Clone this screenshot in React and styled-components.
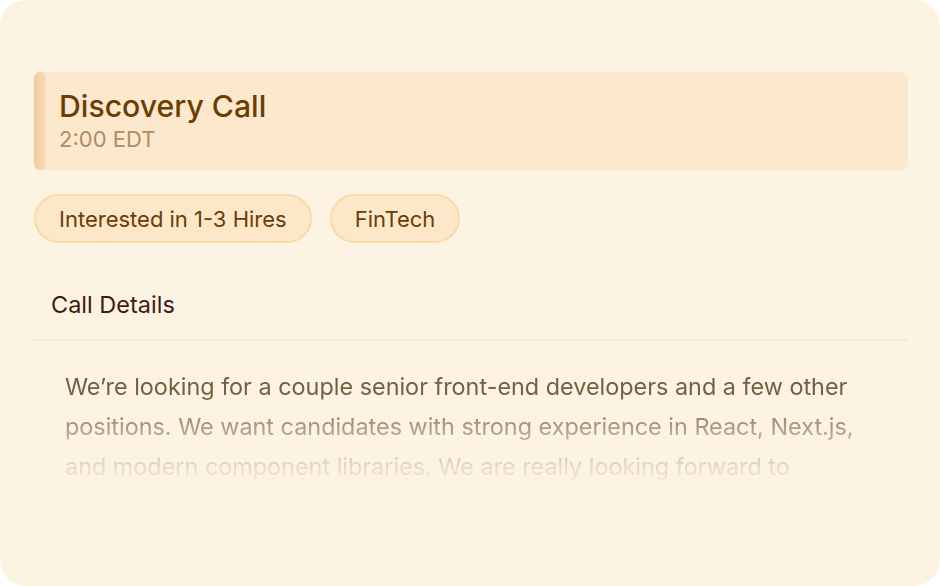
import React from "react";
import styled, { createGlobalStyle } from "styled-components";

const Global = createGlobalStyle`
  html, body { margin: 0; padding: 0; background: #ffffff; }
  body { font-family: Inter, "Noto Sans", sans-serif; -webkit-font-smoothing: antialiased; }
  * { box-sizing: border-box; }
`;

const Card = styled.div`
  width: 940px;
  height: 586px;
  background: #fdf3e3;
  border-radius: 26px;
  padding: 72px 32px 0 34px;
  display: flex;
  flex-direction: column;
  overflow: hidden;
`;

const EventBlock = styled.div`
  display: flex;
  align-items: stretch;
  height: 98px;
  background: #fce8cc;
  border-radius: 6px;
`;

const AccentBar = styled.div`
  width: 12px;
  flex: none;
  border-radius: 6px;
  background: linear-gradient(90deg, #f1cb9c 0%, #f8ddb8 100%);
`;

const EventText = styled.div`
  display: flex;
  flex-direction: column;
  padding: 15px 0 0 13px;
`;

const Title = styled.div`
  font-size: 30.2px;
  line-height: 38px;
  font-weight: 500;
  color: #6b3d05;
`;

const Time = styled.div`
  font-size: 22px;
  line-height: 28px;
  font-weight: 400;
  color: #b18b62;
`;

const Tags = styled.div`
  display: flex;
  gap: 18px;
  margin-top: 24px;
`;

const Tag = styled.div`
  height: 49px;
  display: flex;
  align-items: center;
  padding: 0 23px;
  border: 2px solid #fcdaa6;
  background: #fce7c9;
  border-radius: 999px;
  font-size: 22px;
  font-weight: 400;
  color: #6b3d05;
`;

const SectionHeader = styled.div`
  margin-top: 36px;
  padding: 0 0 0 17px;
  height: 62px;
  font-size: 23.5px;
  line-height: 52px;
  color: #3f1a14;
  border-bottom: 2px solid #efede1;
`;

const Body = styled.p`
  margin: 26px 0 0 31px;
  width: 800px;
  font-size: 23.4px;
  line-height: 40px;
  color: #6f5a3c;
  -webkit-mask-image: linear-gradient(180deg, rgba(0,0,0,1) 0%, rgba(0,0,0,0.95) 25%, rgba(0,0,0,0.5) 55%, rgba(0,0,0,0.14) 85%, rgba(0,0,0,0.06) 100%);
  mask-image: linear-gradient(180deg, rgba(0,0,0,1) 0%, rgba(0,0,0,0.95) 25%, rgba(0,0,0,0.5) 55%, rgba(0,0,0,0.14) 85%, rgba(0,0,0,0.06) 100%);
`;

export default function App() {
  return (
    <>
      <Global />
      <Card>
        <EventBlock>
          <AccentBar />
          <EventText>
            <Title>Discovery Call</Title>
            <Time>2:00 EDT</Time>
          </EventText>
        </EventBlock>
        <Tags>
          <Tag>Interested in 1-3 Hires</Tag>
          <Tag>FinTech</Tag>
        </Tags>
        <SectionHeader>Call Details</SectionHeader>
        <Body>
          We’re looking for a couple senior front-end developers and a few other
          positions. We want candidates with strong experience in React, Next.js,
          and modern component libraries. We are really looking forward to
        </Body>
      </Card>
    </>
  );
}
